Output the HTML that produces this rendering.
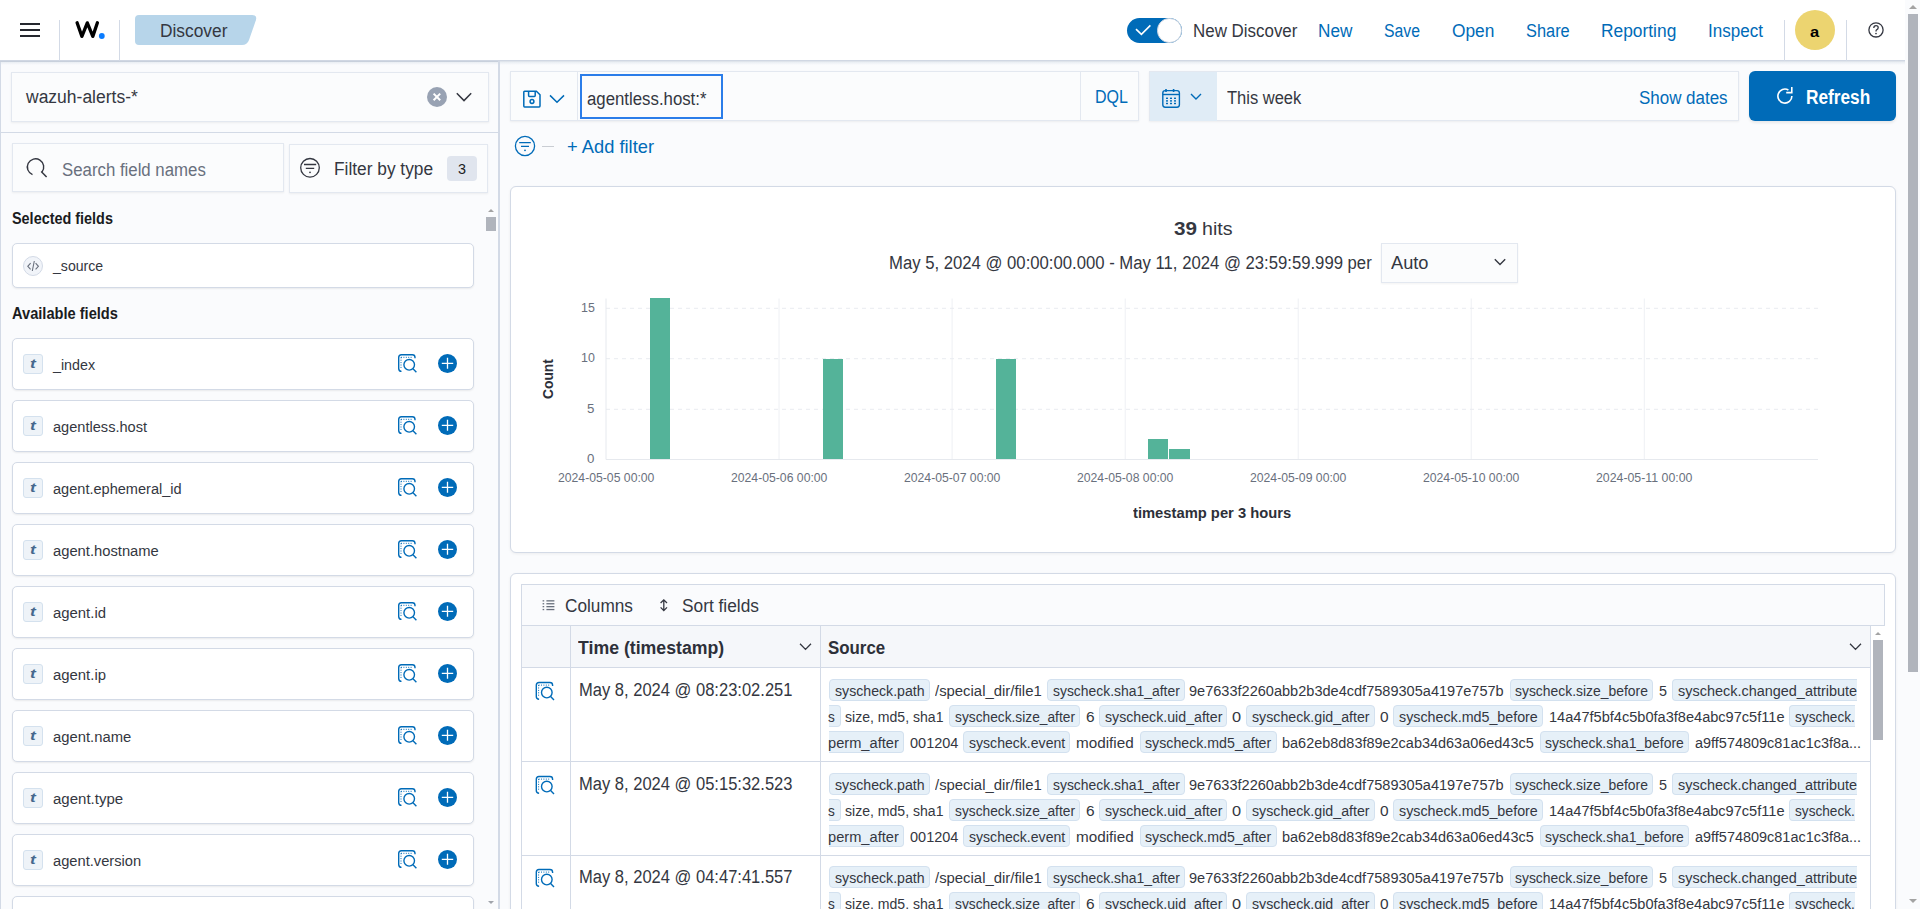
<!DOCTYPE html>
<html><head><meta charset="utf-8"><title>Discover</title>
<style>
html,body{margin:0;padding:0;width:1920px;height:909px;overflow:hidden;background:#fafbfd;font-family:"Liberation Sans",sans-serif;color:#343741}
.t{position:absolute;white-space:nowrap;line-height:1;transform-origin:0 0}
.a{position:absolute;box-sizing:border-box}
svg{position:absolute;overflow:visible}
#root{position:relative;width:1920px;height:909px;overflow:hidden}

</style></head><body>
<div id="root">
<div class="a" style="left:0px;top:0px;width:1905px;height:61px;background:#fff;"></div>
<div class="a" style="left:0px;top:60px;width:1905px;height:1px;background:#d0d7e3;"></div>
<div class="a" style="left:0px;top:61px;width:500px;height:1px;background:#c8d0dc;"></div>
<div class="a" style="left:500px;top:61px;width:1405px;height:1px;background:#dfe4eb;"></div>
<div class="a" style="left:0px;top:62px;width:1905px;height:3px;background:linear-gradient(#e9edf3,rgba(250,251,253,0));"></div>
<div class="a" style="left:20px;top:22.65px;width:20px;height:2px;background:#25282f;"></div>
<div class="a" style="left:20px;top:29px;width:20px;height:2px;background:#25282f;"></div>
<div class="a" style="left:20px;top:35.3px;width:20px;height:2px;background:#25282f;"></div>
<div class="a" style="left:59px;top:20px;width:1px;height:41px;background:#d3dae6;"></div>
<div class="a" style="left:119px;top:20px;width:1px;height:41px;background:#d3dae6;"></div>
<svg style="left:0;top:0" width="1" height="1"><path d="M77.1 22.8 L81.9 36.4 L87.3 22.9 L92.8 36.4 L97.4 22.8" fill="none" stroke="#000" stroke-width="3.3" stroke-linejoin="round" stroke-linecap="round"/><circle cx="101.8" cy="36" r="2.9" fill="#0a7cff"/></svg>
<svg style="left:0;top:0" width="300" height="61"><path d="M139 15 H252.2 Q257.6 15 255.8 20.4 L249 40 Q247.2 45 242 45 H139 Q135 45 135 41 V19 Q135 15 139 15 Z" fill="#b7d5ea"/></svg>
<div class="t" style="left:160.40px;top:21.76px;font-size:18px;color:#343741;transform:scaleX(0.9626);">Discover</div>
<div class="a" style="left:1127px;top:18px;width:55px;height:25px;background:#006bb8;border-radius:13px;"></div>
<div class="a" style="left:1157.2px;top:18.4px;width:24.4px;height:24.4px;background:#fff;border-radius:50%;border:1px solid #c9d3e0;"></div>
<svg style="left:0;top:0" width="1" height="1"><path d="M1136 29.1 L1141.4 34.4 L1150.4 25.4" fill="none" stroke="#fff" stroke-width="1.6"/></svg>
<div class="t" style="left:1192.70px;top:22.26px;font-size:18px;color:#343741;transform:scaleX(0.9403);">New Discover</div>
<div class="t" style="left:1318.20px;top:22.26px;font-size:18px;color:#006bb8;transform:scaleX(0.9551);">New</div>
<div class="t" style="left:1384.00px;top:22.26px;font-size:18px;color:#006bb8;transform:scaleX(0.8774);">Save</div>
<div class="t" style="left:1451.70px;top:22.26px;font-size:18px;color:#006bb8;transform:scaleX(0.9626);">Open</div>
<div class="t" style="left:1525.70px;top:22.26px;font-size:18px;color:#006bb8;transform:scaleX(0.9095);">Share</div>
<div class="t" style="left:1600.80px;top:22.26px;font-size:18px;color:#006bb8;transform:scaleX(0.9648);">Reporting</div>
<div class="t" style="left:1708.20px;top:22.26px;font-size:18px;color:#006bb8;transform:scaleX(0.9475);">Inspect</div>
<div class="a" style="left:1784px;top:20px;width:1px;height:41px;background:#d3dae6;"></div>
<div class="a" style="left:1795px;top:10px;width:40px;height:40px;background:#ecd470;border-radius:50%;"></div>
<div class="t" style="left:1810.30px;top:23.68px;font-size:15.5px;color:#000;font-weight:700;transform:scaleX(1.0667);">a</div>
<div class="a" style="left:1846px;top:20px;width:1px;height:41px;background:#d3dae6;"></div>
<svg style="left:0;top:0" width="1" height="1"><circle cx="1876" cy="29.9" r="7.1" fill="none" stroke="#343741" stroke-width="1.3"/><path d="M1873.8 27.9 Q1873.8 25.6 1876 25.6 Q1878.2 25.6 1878.2 27.6 Q1878.2 29.1 1876.6 29.8 Q1876 30.2 1876 31.4" fill="none" stroke="#343741" stroke-width="1.3"/><circle cx="1876" cy="33.5" r="0.85" fill="#343741"/></svg>
<div class="a" style="left:1905px;top:61px;width:15px;height:848px;background:#fafbfd;"></div>
<div class="a" style="left:1908px;top:14px;width:10px;height:657.5px;background:#b0b4bc;"></div>
<svg style="left:0;top:0" width="1" height="1"><path d="M1909 9 L1913 5 L1917 9 Z" fill="#a3a3a3"/><path d="M1909 899 L1913 903 L1917 899 Z" fill="#a3a3a3"/></svg>
<div class="a" style="left:0px;top:62px;width:1px;height:847px;background:#d3dae6;"></div>
<div class="a" style="left:498px;top:61px;width:2px;height:848px;background:#d3dae6;"></div>
<div class="a" style="left:11px;top:72px;width:478px;height:50px;background:#fbfcfd;border:1px solid #e3e8f0;box-shadow:0 1px 2px rgba(0,0,0,0.06);"></div>
<div class="t" style="left:25.80px;top:88.46px;font-size:18px;color:#343741;transform:scaleX(0.9718);">wazuh-alerts-*</div>
<div class="a" style="left:427px;top:87px;width:20px;height:20px;background:#98a2b3;border-radius:50%;"></div>
<svg style="left:0;top:0" width="1" height="1"><path d="M433.6 93.6 L440.2 100.2 M440.2 93.6 L433.6 100.2" stroke="#fff" stroke-width="2"/><path d="M456.8 93.2 L464 100.6 L471.2 93.2" fill="none" stroke="#343741" stroke-width="1.5"/></svg>
<div class="a" style="left:1px;top:132px;width:497px;height:1px;background:#d3dae6;"></div>
<div class="a" style="left:12px;top:143px;width:272px;height:49px;background:#fbfcfd;border:1px solid #e3e8f0;box-shadow:0 1px 2px rgba(0,0,0,0.06);"></div>
<svg style="left:0;top:0" width="1" height="1"><path d="M32.5 174.6 A8.2 8.2 0 1 1 42 172" fill="none" stroke="#343741" stroke-width="1.4"/><path d="M41.2 171.4 L46.6 177" stroke="#343741" stroke-width="1.5"/></svg>
<div class="t" style="left:61.80px;top:160.86px;font-size:18px;color:#69707d;transform:scaleX(0.9332);">Search field names</div>
<div class="a" style="left:289px;top:143.5px;width:199px;height:49px;background:#fbfcfd;border:1px solid #e3e8f0;box-shadow:0 1px 2px rgba(0,0,0,0.06);"></div>
<svg style="left:0;top:0" width="1" height="1"><circle cx="310" cy="167.8" r="9.3" fill="none" stroke="#343741" stroke-width="1.3"/><path d="M304 164.5 H316.2 M305.8 168.4 H314.2" stroke="#343741" stroke-width="1.4"/><circle cx="310" cy="172.3" r="0.9" fill="#343741"/></svg>
<div class="t" style="left:334.20px;top:159.76px;font-size:18px;color:#343741;transform:scaleX(0.9617);">Filter by type</div>
<div class="a" style="left:447px;top:156px;width:30px;height:25px;background:#e0e5ee;border-radius:4px;"></div>
<div class="t" style="left:458.10px;top:160.88px;font-size:15.5px;color:#1a1c21;transform:scaleX(0.9275);">3</div>
<div class="t" style="left:12.20px;top:210.76px;font-size:16px;color:#1a1c21;font-weight:700;transform:scaleX(0.9005);">Selected fields</div>
<div class="a" style="left:12px;top:243px;width:462px;height:45px;background:#fff;border:1px solid #d3dae6;border-radius:5px;box-shadow:0 1px 2px rgba(0,0,0,0.07);"></div>
<div class="a" style="left:23px;top:256px;width:20px;height:20px;background:#f1f4f9;border:1px solid #d3dae6;border-radius:50%;"></div>
<svg style="left:0;top:0" width="1" height="1"><path d="M30.6 263.2 L27.8 266.3 L30.6 269.3 M35.6 263.2 L38.4 266.3 L35.6 269.3 M34.3 261 L32.3 271" fill="none" stroke="#69707d" stroke-width="1.1"/></svg>
<div class="t" style="left:53.20px;top:258.48px;font-size:15.5px;color:#343741;transform:scaleX(0.9101);">_source</div>
<div class="t" style="left:12.20px;top:306.06px;font-size:16px;color:#1a1c21;font-weight:700;transform:scaleX(0.9137);">Available fields</div>
<div class="a" style="left:12px;top:338px;width:462px;height:52px;background:#fff;border:1px solid #d3dae6;border-radius:5px;box-shadow:0 1px 2px rgba(0,0,0,0.07);"></div>
<div class="a" style="left:23px;top:354px;width:20px;height:20px;background:#eef3f8;border:1px solid #d4e1ee;border-radius:3px;"></div>
<div class="t" style="left:30.00px;top:357.20px;font-size:13px;color:#46698e;font-weight:700;transform:scaleX(1.3353);font-style:italic;">t</div>
<div class="t" style="left:53.40px;top:356.88px;font-size:15.5px;color:#343741;transform:scaleX(0.9215);">_index</div>
<svg style="left:0;top:0" width="1" height="1"><g transform="translate(398,354)" fill="none" stroke="#006bb8" stroke-width="1.4"><path d="M3.5 17.4 Q0.7 17.4 0.7 14.6 V3.4 Q0.7 0.7 3.4 0.7 H14.3 Q17 0.7 17 3.4 V4.3"/><circle cx="11.2" cy="10.8" r="5.3"/><path d="M15 14.8 L18.4 18.3"/><path d="M3 3.3 H15 M3 3.3 V14" stroke-width="1" stroke-dasharray="1 1.4"/></g></svg>
<div class="a" style="left:438px;top:353.8px;width:19px;height:19px;background:#006bb8;border-radius:50%;"></div>
<svg style="left:0;top:0" width="1" height="1"><path d="M441.8 363.3 H453.2 M447.5 357.8 V368.8" stroke="#fff" stroke-width="1.3"/></svg>
<div class="a" style="left:12px;top:400px;width:462px;height:52px;background:#fff;border:1px solid #d3dae6;border-radius:5px;box-shadow:0 1px 2px rgba(0,0,0,0.07);"></div>
<div class="a" style="left:23px;top:416px;width:20px;height:20px;background:#eef3f8;border:1px solid #d4e1ee;border-radius:3px;"></div>
<div class="t" style="left:30.00px;top:419.20px;font-size:13px;color:#46698e;font-weight:700;transform:scaleX(1.3353);font-style:italic;">t</div>
<div class="t" style="left:53.40px;top:418.88px;font-size:15.5px;color:#343741;transform:scaleX(0.9413);">agentless.host</div>
<svg style="left:0;top:0" width="1" height="1"><g transform="translate(398,416)" fill="none" stroke="#006bb8" stroke-width="1.4"><path d="M3.5 17.4 Q0.7 17.4 0.7 14.6 V3.4 Q0.7 0.7 3.4 0.7 H14.3 Q17 0.7 17 3.4 V4.3"/><circle cx="11.2" cy="10.8" r="5.3"/><path d="M15 14.8 L18.4 18.3"/><path d="M3 3.3 H15 M3 3.3 V14" stroke-width="1" stroke-dasharray="1 1.4"/></g></svg>
<div class="a" style="left:438px;top:415.8px;width:19px;height:19px;background:#006bb8;border-radius:50%;"></div>
<svg style="left:0;top:0" width="1" height="1"><path d="M441.8 425.3 H453.2 M447.5 419.8 V430.8" stroke="#fff" stroke-width="1.3"/></svg>
<div class="a" style="left:12px;top:462px;width:462px;height:52px;background:#fff;border:1px solid #d3dae6;border-radius:5px;box-shadow:0 1px 2px rgba(0,0,0,0.07);"></div>
<div class="a" style="left:23px;top:478px;width:20px;height:20px;background:#eef3f8;border:1px solid #d4e1ee;border-radius:3px;"></div>
<div class="t" style="left:30.00px;top:481.20px;font-size:13px;color:#46698e;font-weight:700;transform:scaleX(1.3353);font-style:italic;">t</div>
<div class="t" style="left:53.40px;top:480.88px;font-size:15.5px;color:#343741;transform:scaleX(0.9392);">agent.ephemeral_id</div>
<svg style="left:0;top:0" width="1" height="1"><g transform="translate(398,478)" fill="none" stroke="#006bb8" stroke-width="1.4"><path d="M3.5 17.4 Q0.7 17.4 0.7 14.6 V3.4 Q0.7 0.7 3.4 0.7 H14.3 Q17 0.7 17 3.4 V4.3"/><circle cx="11.2" cy="10.8" r="5.3"/><path d="M15 14.8 L18.4 18.3"/><path d="M3 3.3 H15 M3 3.3 V14" stroke-width="1" stroke-dasharray="1 1.4"/></g></svg>
<div class="a" style="left:438px;top:477.8px;width:19px;height:19px;background:#006bb8;border-radius:50%;"></div>
<svg style="left:0;top:0" width="1" height="1"><path d="M441.8 487.3 H453.2 M447.5 481.8 V492.8" stroke="#fff" stroke-width="1.3"/></svg>
<div class="a" style="left:12px;top:524px;width:462px;height:52px;background:#fff;border:1px solid #d3dae6;border-radius:5px;box-shadow:0 1px 2px rgba(0,0,0,0.07);"></div>
<div class="a" style="left:23px;top:540px;width:20px;height:20px;background:#eef3f8;border:1px solid #d4e1ee;border-radius:3px;"></div>
<div class="t" style="left:30.00px;top:543.20px;font-size:13px;color:#46698e;font-weight:700;transform:scaleX(1.3353);font-style:italic;">t</div>
<div class="t" style="left:53.40px;top:542.88px;font-size:15.5px;color:#343741;transform:scaleX(0.9517);">agent.hostname</div>
<svg style="left:0;top:0" width="1" height="1"><g transform="translate(398,540)" fill="none" stroke="#006bb8" stroke-width="1.4"><path d="M3.5 17.4 Q0.7 17.4 0.7 14.6 V3.4 Q0.7 0.7 3.4 0.7 H14.3 Q17 0.7 17 3.4 V4.3"/><circle cx="11.2" cy="10.8" r="5.3"/><path d="M15 14.8 L18.4 18.3"/><path d="M3 3.3 H15 M3 3.3 V14" stroke-width="1" stroke-dasharray="1 1.4"/></g></svg>
<div class="a" style="left:438px;top:539.8px;width:19px;height:19px;background:#006bb8;border-radius:50%;"></div>
<svg style="left:0;top:0" width="1" height="1"><path d="M441.8 549.3 H453.2 M447.5 543.8 V554.8" stroke="#fff" stroke-width="1.3"/></svg>
<div class="a" style="left:12px;top:586px;width:462px;height:52px;background:#fff;border:1px solid #d3dae6;border-radius:5px;box-shadow:0 1px 2px rgba(0,0,0,0.07);"></div>
<div class="a" style="left:23px;top:602px;width:20px;height:20px;background:#eef3f8;border:1px solid #d4e1ee;border-radius:3px;"></div>
<div class="t" style="left:30.00px;top:605.20px;font-size:13px;color:#46698e;font-weight:700;transform:scaleX(1.3353);font-style:italic;">t</div>
<div class="t" style="left:53.40px;top:604.88px;font-size:15.5px;color:#343741;transform:scaleX(0.9606);">agent.id</div>
<svg style="left:0;top:0" width="1" height="1"><g transform="translate(398,602)" fill="none" stroke="#006bb8" stroke-width="1.4"><path d="M3.5 17.4 Q0.7 17.4 0.7 14.6 V3.4 Q0.7 0.7 3.4 0.7 H14.3 Q17 0.7 17 3.4 V4.3"/><circle cx="11.2" cy="10.8" r="5.3"/><path d="M15 14.8 L18.4 18.3"/><path d="M3 3.3 H15 M3 3.3 V14" stroke-width="1" stroke-dasharray="1 1.4"/></g></svg>
<div class="a" style="left:438px;top:601.8px;width:19px;height:19px;background:#006bb8;border-radius:50%;"></div>
<svg style="left:0;top:0" width="1" height="1"><path d="M441.8 611.3 H453.2 M447.5 605.8 V616.8" stroke="#fff" stroke-width="1.3"/></svg>
<div class="a" style="left:12px;top:648px;width:462px;height:52px;background:#fff;border:1px solid #d3dae6;border-radius:5px;box-shadow:0 1px 2px rgba(0,0,0,0.07);"></div>
<div class="a" style="left:23px;top:664px;width:20px;height:20px;background:#eef3f8;border:1px solid #d4e1ee;border-radius:3px;"></div>
<div class="t" style="left:30.00px;top:667.20px;font-size:13px;color:#46698e;font-weight:700;transform:scaleX(1.3353);font-style:italic;">t</div>
<div class="t" style="left:53.40px;top:666.88px;font-size:15.5px;color:#343741;transform:scaleX(0.9606);">agent.ip</div>
<svg style="left:0;top:0" width="1" height="1"><g transform="translate(398,664)" fill="none" stroke="#006bb8" stroke-width="1.4"><path d="M3.5 17.4 Q0.7 17.4 0.7 14.6 V3.4 Q0.7 0.7 3.4 0.7 H14.3 Q17 0.7 17 3.4 V4.3"/><circle cx="11.2" cy="10.8" r="5.3"/><path d="M15 14.8 L18.4 18.3"/><path d="M3 3.3 H15 M3 3.3 V14" stroke-width="1" stroke-dasharray="1 1.4"/></g></svg>
<div class="a" style="left:438px;top:663.8px;width:19px;height:19px;background:#006bb8;border-radius:50%;"></div>
<svg style="left:0;top:0" width="1" height="1"><path d="M441.8 673.3 H453.2 M447.5 667.8 V678.8" stroke="#fff" stroke-width="1.3"/></svg>
<div class="a" style="left:12px;top:710px;width:462px;height:52px;background:#fff;border:1px solid #d3dae6;border-radius:5px;box-shadow:0 1px 2px rgba(0,0,0,0.07);"></div>
<div class="a" style="left:23px;top:726px;width:20px;height:20px;background:#eef3f8;border:1px solid #d4e1ee;border-radius:3px;"></div>
<div class="t" style="left:30.00px;top:729.20px;font-size:13px;color:#46698e;font-weight:700;transform:scaleX(1.3353);font-style:italic;">t</div>
<div class="t" style="left:53.40px;top:728.88px;font-size:15.5px;color:#343741;transform:scaleX(0.9551);">agent.name</div>
<svg style="left:0;top:0" width="1" height="1"><g transform="translate(398,726)" fill="none" stroke="#006bb8" stroke-width="1.4"><path d="M3.5 17.4 Q0.7 17.4 0.7 14.6 V3.4 Q0.7 0.7 3.4 0.7 H14.3 Q17 0.7 17 3.4 V4.3"/><circle cx="11.2" cy="10.8" r="5.3"/><path d="M15 14.8 L18.4 18.3"/><path d="M3 3.3 H15 M3 3.3 V14" stroke-width="1" stroke-dasharray="1 1.4"/></g></svg>
<div class="a" style="left:438px;top:725.8px;width:19px;height:19px;background:#006bb8;border-radius:50%;"></div>
<svg style="left:0;top:0" width="1" height="1"><path d="M441.8 735.3 H453.2 M447.5 729.8 V740.8" stroke="#fff" stroke-width="1.3"/></svg>
<div class="a" style="left:12px;top:772px;width:462px;height:52px;background:#fff;border:1px solid #d3dae6;border-radius:5px;box-shadow:0 1px 2px rgba(0,0,0,0.07);"></div>
<div class="a" style="left:23px;top:788px;width:20px;height:20px;background:#eef3f8;border:1px solid #d4e1ee;border-radius:3px;"></div>
<div class="t" style="left:30.00px;top:791.20px;font-size:13px;color:#46698e;font-weight:700;transform:scaleX(1.3353);font-style:italic;">t</div>
<div class="t" style="left:53.40px;top:790.88px;font-size:15.5px;color:#343741;transform:scaleX(0.9681);">agent.type</div>
<svg style="left:0;top:0" width="1" height="1"><g transform="translate(398,788)" fill="none" stroke="#006bb8" stroke-width="1.4"><path d="M3.5 17.4 Q0.7 17.4 0.7 14.6 V3.4 Q0.7 0.7 3.4 0.7 H14.3 Q17 0.7 17 3.4 V4.3"/><circle cx="11.2" cy="10.8" r="5.3"/><path d="M15 14.8 L18.4 18.3"/><path d="M3 3.3 H15 M3 3.3 V14" stroke-width="1" stroke-dasharray="1 1.4"/></g></svg>
<div class="a" style="left:438px;top:787.8px;width:19px;height:19px;background:#006bb8;border-radius:50%;"></div>
<svg style="left:0;top:0" width="1" height="1"><path d="M441.8 797.3 H453.2 M447.5 791.8 V802.8" stroke="#fff" stroke-width="1.3"/></svg>
<div class="a" style="left:12px;top:834px;width:462px;height:52px;background:#fff;border:1px solid #d3dae6;border-radius:5px;box-shadow:0 1px 2px rgba(0,0,0,0.07);"></div>
<div class="a" style="left:23px;top:850px;width:20px;height:20px;background:#eef3f8;border:1px solid #d4e1ee;border-radius:3px;"></div>
<div class="t" style="left:30.00px;top:853.20px;font-size:13px;color:#46698e;font-weight:700;transform:scaleX(1.3353);font-style:italic;">t</div>
<div class="t" style="left:53.40px;top:852.88px;font-size:15.5px;color:#343741;transform:scaleX(0.9478);">agent.version</div>
<svg style="left:0;top:0" width="1" height="1"><g transform="translate(398,850)" fill="none" stroke="#006bb8" stroke-width="1.4"><path d="M3.5 17.4 Q0.7 17.4 0.7 14.6 V3.4 Q0.7 0.7 3.4 0.7 H14.3 Q17 0.7 17 3.4 V4.3"/><circle cx="11.2" cy="10.8" r="5.3"/><path d="M15 14.8 L18.4 18.3"/><path d="M3 3.3 H15 M3 3.3 V14" stroke-width="1" stroke-dasharray="1 1.4"/></g></svg>
<div class="a" style="left:438px;top:849.8px;width:19px;height:19px;background:#006bb8;border-radius:50%;"></div>
<svg style="left:0;top:0" width="1" height="1"><path d="M441.8 859.3 H453.2 M447.5 853.8 V864.8" stroke="#fff" stroke-width="1.3"/></svg>
<div class="a" style="left:12px;top:896px;width:462px;height:52px;background:#fff;border:1px solid #d3dae6;border-radius:5px;box-shadow:0 1px 2px rgba(0,0,0,0.07);"></div>
<div class="a" style="left:486px;top:217px;width:10px;height:14px;background:#b0b4bc;"></div>
<svg style="left:0;top:0" width="1" height="1"><path d="M488 212 L491 209 L494 212 Z" fill="#a3a3a3"/><path d="M488 901 L491 904 L494 901 Z" fill="#a0a4ab"/></svg>
<div class="a" style="left:510px;top:71px;width:629px;height:50px;background:#fbfcfd;border:1px solid #e3e8f0;box-shadow:0 1px 2px rgba(0,0,0,0.06);"></div>
<svg style="left:0;top:0" width="1" height="1"><g fill="none" stroke="#006bb8" stroke-width="1.5"><path d="M524.6 91.2 H536.4 L540 94.8 V106 Q540 106.9 539.1 106.9 H524.6 Q523.8 106.9 523.8 106 V92 Q523.8 91.2 524.6 91.2 Z"/><path d="M528.6 91.4 V95.6 Q528.6 96.4 529.4 96.4 H534.4 Q535.2 96.4 535.2 95.6 V91.4"/><circle cx="532" cy="101.5" r="1.9"/><path d="M550 95.4 L557 102.2 L564 95.4"/></g></svg>
<div class="a" style="left:577px;top:72px;width:1px;height:48px;background:#e3e8f0;"></div>
<div class="a" style="left:580px;top:74px;width:143px;height:45px;border:2px solid #2b7de9;background:#fbfcfd;"></div>
<div class="t" style="left:587.10px;top:90.36px;font-size:18px;color:#343741;transform:scaleX(0.9329);">agentless.host:*</div>
<div class="a" style="left:1080px;top:72px;width:1px;height:48px;background:#e3e8f0;"></div>
<div class="t" style="left:1094.70px;top:87.56px;font-size:18px;color:#006bb8;transform:scaleX(0.8888);">DQL</div>
<div class="a" style="left:1149px;top:71px;width:590px;height:50px;background:#fbfcfd;border:1px solid #e3e8f0;box-shadow:0 1px 2px rgba(0,0,0,0.06);"></div>
<div class="a" style="left:1149.5px;top:71.5px;width:67.5px;height:49px;background:#e0ecf6;"></div>
<svg style="left:0;top:0" width="1" height="1"><g fill="none" stroke="#006bb8" stroke-width="1.4"><rect x="1162.8" y="90.6" width="16.6" height="16.6" rx="2.4"/><path d="M1162.8 94.5 H1179.4"/><path d="M1166 89 V92 M1173.6 89 V92" stroke-width="1.6"/><path d="M1191 94 L1196 99 L1201 94"/></g><g fill="#006bb8"><rect x="1166" y="97.6" width="2" height="1.4"/><rect x="1170" y="97.6" width="2" height="1.4"/><rect x="1174" y="97.6" width="2" height="1.4"/><rect x="1166" y="100.2" width="2" height="1.4"/><rect x="1170" y="100.2" width="2" height="1.4"/><rect x="1174" y="100.2" width="2" height="1.4"/><rect x="1166" y="102.8" width="2" height="1.4"/><rect x="1170" y="102.8" width="2" height="1.4"/><rect x="1174" y="102.8" width="2" height="1.4"/></g></svg>
<div class="t" style="left:1226.90px;top:88.76px;font-size:18px;color:#343741;transform:scaleX(0.9169);">This week</div>
<div class="t" style="left:1639.20px;top:88.76px;font-size:18px;color:#006bb8;transform:scaleX(0.9419);">Show dates</div>
<div class="a" style="left:1749px;top:71px;width:147px;height:50px;background:#006bb8;border-radius:6px;box-shadow:0 2px 3px rgba(0,0,0,0.08);"></div>
<svg style="left:0;top:0" width="1" height="1"><path d="M1791.9 96 A7 7 0 1 1 1788.4 90" fill="none" stroke="#fff" stroke-width="1.6"/><path d="M1791.8 87 V92.6 H1786.2" fill="none" stroke="#fff" stroke-width="1.6"/></svg>
<div class="t" style="left:1805.60px;top:86.87px;font-size:20px;color:#fff;font-weight:700;transform:scaleX(0.8619);">Refresh</div>
<svg style="left:0;top:0" width="1" height="1"><g fill="none" stroke="#006bb8" stroke-width="1.3"><circle cx="525" cy="146" r="9.6"/><path d="M519.2 142.6 H530.8 M521 146.4 H529"/></g><circle cx="525" cy="150.3" r="0.9" fill="#006bb8"/></svg>
<div class="a" style="left:542px;top:145.5px;width:12px;height:1px;background:#c9cdd3;"></div>
<div class="t" style="left:566.90px;top:136.82px;font-size:19px;color:#006bb8;transform:scaleX(0.9633);">+ Add filter</div>
<div class="a" style="left:510px;top:186px;width:1386px;height:367px;background:#fff;border:1px solid #d3dae6;border-radius:6px;box-shadow:0 1px 3px rgba(0,0,0,0.06);"></div>
<div class="t" style="left:1173.70px;top:218.82px;font-size:19px;color:#343741;font-weight:700;transform:scaleX(1.0880);">39</div>
<div class="t" style="left:1202.30px;top:218.82px;font-size:19px;color:#343741;transform:scaleX(1.0312);">hits</div>
<div class="t" style="left:888.60px;top:253.76px;font-size:18px;color:#343741;transform:scaleX(0.9273);">May 5, 2024 @ 00:00:00.000 - May 11, 2024 @ 23:59:59.999 per</div>
<div class="a" style="left:1381px;top:242.5px;width:137px;height:40px;background:#fbfcfd;border:1px solid #e3e8f0;box-shadow:0 1px 2px rgba(0,0,0,0.05);"></div>
<div class="t" style="left:1391.10px;top:253.76px;font-size:18px;color:#343741;transform:scaleX(1.0127);">Auto</div>
<svg style="left:0;top:0" width="1" height="1"><path d="M1494.8 259.2 L1500 264.4 L1505.2 259.2" fill="none" stroke="#343741" stroke-width="1.4"/></svg>
<svg style="left:0;top:0" width="1" height="1"><path d="M779.0 298.5 V459" stroke="#eef0f4" stroke-width="1"/><path d="M952.1 298.5 V459" stroke="#eef0f4" stroke-width="1"/><path d="M1125.2 298.5 V459" stroke="#eef0f4" stroke-width="1"/><path d="M1298.2 298.5 V459" stroke="#eef0f4" stroke-width="1"/><path d="M1471.2 298.5 V459" stroke="#eef0f4" stroke-width="1"/><path d="M1644.3 298.5 V459" stroke="#eef0f4" stroke-width="1"/><path d="M606 308.3 H1818" stroke="#e9ecf0" stroke-width="1" stroke-dasharray="4 4"/><path d="M606 358.7 H1818" stroke="#e9ecf0" stroke-width="1" stroke-dasharray="4 4"/><path d="M606 409.3 H1818" stroke="#e9ecf0" stroke-width="1" stroke-dasharray="4 4"/><path d="M606 298.5 V459.5 M606 459.5 H1818" stroke="#e6e9ee" stroke-width="1"/></svg>
<div class="a" style="left:650px;top:298.4px;width:20.200000000000045px;height:160.8px;background:#54b399;"></div>
<div class="a" style="left:823px;top:358.6px;width:20.200000000000045px;height:100.59999999999997px;background:#54b399;"></div>
<div class="a" style="left:996.2px;top:358.6px;width:20.199999999999932px;height:100.59999999999997px;background:#54b399;"></div>
<div class="a" style="left:1147.7px;top:439.3px;width:20.09999999999991px;height:19.899999999999977px;background:#54b399;"></div>
<div class="a" style="left:1169.2px;top:449.2px;width:20.59999999999991px;height:10.0px;background:#54b399;"></div>
<div class="t" style="left:580.60px;top:302.14px;font-size:12px;color:#69707d;transform:scaleX(1.0330);">15</div>
<div class="t" style="left:580.60px;top:352.44px;font-size:12px;color:#69707d;transform:scaleX(1.0330);">10</div>
<div class="t" style="left:587.00px;top:402.64px;font-size:12px;color:#69707d;transform:scaleX(1.1065);">5</div>
<div class="t" style="left:587.00px;top:452.64px;font-size:12px;color:#69707d;transform:scaleX(1.1065);">0</div>
<div class="t" style="left:557.80px;top:471.10px;font-size:13px;color:#69707d;transform:scaleX(0.9391);">2024-05-05 00:00</div>
<div class="t" style="left:730.85px;top:471.10px;font-size:13px;color:#69707d;transform:scaleX(0.9391);">2024-05-06 00:00</div>
<div class="t" style="left:903.90px;top:471.10px;font-size:13px;color:#69707d;transform:scaleX(0.9391);">2024-05-07 00:00</div>
<div class="t" style="left:1076.95px;top:471.10px;font-size:13px;color:#69707d;transform:scaleX(0.9391);">2024-05-08 00:00</div>
<div class="t" style="left:1250.00px;top:471.10px;font-size:13px;color:#69707d;transform:scaleX(0.9391);">2024-05-09 00:00</div>
<div class="t" style="left:1423.05px;top:471.10px;font-size:13px;color:#69707d;transform:scaleX(0.9391);">2024-05-10 00:00</div>
<div class="t" style="left:1596.10px;top:471.10px;font-size:13px;color:#69707d;transform:scaleX(0.9480);">2024-05-11 00:00</div>
<div class="t" style="left:542px;top:399px;font-size:15px;font-weight:700;color:#2d3039;transform:rotate(-90deg) scaleX(0.92);transform-origin:0 0;line-height:11px">Count</div>
<div class="t" style="left:1133.00px;top:505.30px;font-size:15px;color:#2d3039;font-weight:700;transform:scaleX(0.9833);">timestamp per 3 hours</div>
<div class="a" style="left:510px;top:573px;width:1386px;height:360px;background:#fff;border:1px solid #d3dae6;border-radius:6px;box-shadow:0 1px 3px rgba(0,0,0,0.06);"></div>
<div class="a" style="left:521px;top:584px;width:1364px;height:42px;background:#fff;border:1px solid #d3dae6;"></div>
<div class="a" style="left:521px;top:625px;width:1px;height:290px;background:#d3dae6;"></div>
<div class="a" style="left:522px;top:585px;width:1362px;height:40px;background:#fafbfd;"></div>
<div class="a" style="left:522px;top:625px;width:1362px;height:1px;background:#d3dae6;"></div>
<svg style="left:0;top:0" width="1" height="1"><g fill="#69707d"><rect x="542.6" y="600.1999999999999" width="1.6" height="1.3"/><rect x="546.4" y="600.1999999999999" width="8" height="1.3"/><rect x="542.6" y="603.1" width="1.6" height="1.3"/><rect x="546.4" y="603.1" width="8" height="1.3"/><rect x="542.6" y="606.0" width="1.6" height="1.3"/><rect x="546.4" y="606.0" width="8" height="1.3"/><rect x="542.6" y="608.9" width="1.6" height="1.3"/><rect x="546.4" y="608.9" width="8" height="1.3"/></g><path d="M663.8 600.2 V610.2 M660.6 603 L663.8 599.8 L667 603 M660.6 607.4 L663.8 610.6 L667 607.4" fill="none" stroke="#343741" stroke-width="1.3"/></svg>
<div class="t" style="left:565.30px;top:596.76px;font-size:18px;color:#343741;transform:scaleX(0.9559);">Columns</div>
<div class="t" style="left:681.80px;top:596.76px;font-size:18px;color:#343741;transform:scaleX(0.9619);">Sort fields</div>
<div class="a" style="left:522px;top:626px;width:1348px;height:41.5px;background:#f5f7fa;"></div>
<div class="a" style="left:522px;top:667px;width:1348px;height:1px;background:#d3dae6;"></div>
<div class="a" style="left:570px;top:626px;width:1px;height:290px;background:#d3dae6;"></div>
<div class="a" style="left:819.5px;top:626px;width:1px;height:290px;background:#d3dae6;"></div>
<div class="a" style="left:1870px;top:626px;width:1px;height:290px;background:#d3dae6;"></div>
<div class="t" style="left:578.40px;top:638.56px;font-size:18px;color:#2d3039;font-weight:700;transform:scaleX(0.9832);">Time (timestamp)</div>
<div class="t" style="left:828.00px;top:638.56px;font-size:18px;color:#2d3039;font-weight:700;transform:scaleX(0.9372);">Source</div>
<svg style="left:0;top:0" width="1" height="1"><path d="M800 643.8 L805.5 649.4 L811 643.8 M1850 643.8 L1855.5 649.4 L1861 643.8" fill="none" stroke="#343741" stroke-width="1.3"/></svg>
<div class="a" style="left:1873px;top:640px;width:10px;height:100px;background:#b0b4bc;"></div>
<svg style="left:0;top:0" width="1" height="1"><path d="M1875 635 L1878 632 L1881 635 Z" fill="#a3a3a3"/></svg>
<svg style="left:0;top:0" width="1" height="1"><g transform="translate(535.6,681.8)" fill="none" stroke="#006bb8" stroke-width="1.4"><path d="M3.5 17.4 Q0.7 17.4 0.7 14.6 V3.4 Q0.7 0.7 3.4 0.7 H14.3 Q17 0.7 17 3.4 V4.3"/><circle cx="11.2" cy="10.8" r="5.3"/><path d="M15 14.8 L18.4 18.3"/><path d="M3 3.3 H15 M3 3.3 V14" stroke-width="1" stroke-dasharray="1 1.4"/></g></svg>
<div class="t" style="left:578.60px;top:680.76px;font-size:18px;color:#343741;transform:scaleX(0.9185);">May 8, 2024 @ 08:23:02.251</div>
<div class="a" style="left:829.3px;top:679px;width:100.40000000000009px;height:22px;background:#e6f0f8;border:1px solid #d3e1ef;border-radius:4px;"></div>
<div class="t" style="left:834.70px;top:682.88px;font-size:15.5px;color:#343741;transform:scaleX(0.9122);">syscheck.path</div>
<div class="t" style="left:934.70px;top:682.88px;font-size:15.5px;color:#343741;transform:scaleX(0.9599);">/special_dir/file1</div>
<div class="a" style="left:1047.2px;top:679px;width:137.5999999999999px;height:22px;background:#e6f0f8;border:1px solid #d3e1ef;border-radius:4px;"></div>
<div class="t" style="left:1052.60px;top:682.88px;font-size:15.5px;color:#343741;transform:scaleX(0.8974);">syscheck.sha1_after</div>
<div class="t" style="left:1189.20px;top:682.88px;font-size:15.5px;color:#343741;transform:scaleX(0.9385);">9e7633f2260abb2b3de4cdf7589305a4197e757b</div>
<div class="a" style="left:1509.7px;top:679px;width:143.70000000000005px;height:22px;background:#e6f0f8;border:1px solid #d3e1ef;border-radius:4px;"></div>
<div class="t" style="left:1515.10px;top:682.88px;font-size:15.5px;color:#343741;transform:scaleX(0.8968);">syscheck.size_before</div>
<div class="t" style="left:1659.20px;top:682.88px;font-size:15.5px;color:#343741;transform:scaleX(0.9275);">5</div>
<div class="a" style="left:1672.3px;top:679px;width:184.5px;height:22px;background:#e6f0f8;border:1px solid #d3e1ef;border-radius:4px;border-right:none;border-top-right-radius:0;border-bottom-right-radius:0;"></div>
<div class="t" style="left:1677.70px;top:682.88px;font-size:15.5px;color:#343741;transform:scaleX(0.9321);">syscheck.changed_attribute</div>
<div class="a" style="left:829px;top:705px;width:11.5px;height:22px;background:#e6f0f8;border:1px solid #d3e1ef;border-radius:4px;border-left:none;border-top-left-radius:0;border-bottom-left-radius:0;"></div>
<div class="t" style="left:828.20px;top:708.88px;font-size:15.5px;color:#343741;transform:scaleX(0.8774);">s</div>
<div class="t" style="left:845.30px;top:708.88px;font-size:15.5px;color:#343741;transform:scaleX(0.9073);">size, md5, sha1</div>
<div class="a" style="left:949.4px;top:705px;width:130.80000000000007px;height:22px;background:#e6f0f8;border:1px solid #d3e1ef;border-radius:4px;"></div>
<div class="t" style="left:954.80px;top:708.88px;font-size:15.5px;color:#343741;transform:scaleX(0.8872);">syscheck.size_after</div>
<div class="t" style="left:1085.60px;top:708.88px;font-size:15.5px;color:#343741;transform:scaleX(0.9971);">6</div>
<div class="a" style="left:1099.3px;top:705px;width:128.20000000000005px;height:22px;background:#e6f0f8;border:1px solid #d3e1ef;border-radius:4px;"></div>
<div class="t" style="left:1104.70px;top:708.88px;font-size:15.5px;color:#343741;transform:scaleX(0.9145);">syscheck.uid_after</div>
<div class="t" style="left:1232.40px;top:708.88px;font-size:15.5px;color:#343741;transform:scaleX(1.0551);">0</div>
<div class="a" style="left:1246.25px;top:705px;width:128.3499999999999px;height:22px;background:#e6f0f8;border:1px solid #d3e1ef;border-radius:4px;"></div>
<div class="t" style="left:1251.65px;top:708.88px;font-size:15.5px;color:#343741;transform:scaleX(0.9157);">syscheck.gid_after</div>
<div class="t" style="left:1380.00px;top:708.88px;font-size:15.5px;color:#343741;transform:scaleX(0.9971);">0</div>
<div class="a" style="left:1393.1px;top:705px;width:149.60000000000014px;height:22px;background:#e6f0f8;border:1px solid #d3e1ef;border-radius:4px;"></div>
<div class="t" style="left:1398.50px;top:708.88px;font-size:15.5px;color:#343741;transform:scaleX(0.9205);">syscheck.md5_before</div>
<div class="t" style="left:1548.80px;top:708.88px;font-size:15.5px;color:#343741;transform:scaleX(0.9400);">14a47f5bf4c5b0fa3f8e4abc97c5f11e</div>
<div class="a" style="left:1789.1px;top:705px;width:65.90000000000009px;height:22px;background:#e6f0f8;border:1px solid #d3e1ef;border-radius:4px;border-right:none;border-top-right-radius:0;border-bottom-right-radius:0;"></div>
<div class="t" style="left:1794.50px;top:708.88px;font-size:15.5px;color:#343741;transform:scaleX(0.8801);">syscheck.</div>
<div class="a" style="left:829px;top:731px;width:75.39999999999998px;height:22px;background:#e6f0f8;border:1px solid #d3e1ef;border-radius:4px;border-left:none;border-top-left-radius:0;border-bottom-left-radius:0;"></div>
<div class="t" style="left:828.20px;top:734.88px;font-size:15.5px;color:#343741;transform:scaleX(0.9446);">perm_after</div>
<div class="t" style="left:909.80px;top:734.88px;font-size:15.5px;color:#343741;transform:scaleX(0.9355);">001204</div>
<div class="a" style="left:963.3px;top:731px;width:107.0px;height:22px;background:#e6f0f8;border:1px solid #d3e1ef;border-radius:4px;"></div>
<div class="t" style="left:968.70px;top:734.88px;font-size:15.5px;color:#343741;transform:scaleX(0.9078);">syscheck.event</div>
<div class="t" style="left:1075.90px;top:734.88px;font-size:15.5px;color:#343741;transform:scaleX(0.9847);">modified</div>
<div class="a" style="left:1139.5px;top:731px;width:137.0px;height:22px;background:#e6f0f8;border:1px solid #d3e1ef;border-radius:4px;"></div>
<div class="t" style="left:1144.90px;top:734.88px;font-size:15.5px;color:#343741;transform:scaleX(0.9155);">syscheck.md5_after</div>
<div class="t" style="left:1281.90px;top:734.88px;font-size:15.5px;color:#343741;transform:scaleX(0.9329);">ba62eb8d83f89e2cab34d63a06ed43c5</div>
<div class="a" style="left:1539.8px;top:731px;width:149.60000000000014px;height:22px;background:#e6f0f8;border:1px solid #d3e1ef;border-radius:4px;"></div>
<div class="t" style="left:1545.20px;top:734.88px;font-size:15.5px;color:#343741;transform:scaleX(0.8999);">syscheck.sha1_before</div>
<div class="t" style="left:1694.70px;top:734.88px;font-size:15.5px;color:#343741;transform:scaleX(0.9325);">a9ff574809c81ac1c3f8a...</div>
<div class="a" style="left:522px;top:761px;width:1348px;height:1px;background:#d3dae6;"></div>
<svg style="left:0;top:0" width="1" height="1"><g transform="translate(535.6,775.8)" fill="none" stroke="#006bb8" stroke-width="1.4"><path d="M3.5 17.4 Q0.7 17.4 0.7 14.6 V3.4 Q0.7 0.7 3.4 0.7 H14.3 Q17 0.7 17 3.4 V4.3"/><circle cx="11.2" cy="10.8" r="5.3"/><path d="M15 14.8 L18.4 18.3"/><path d="M3 3.3 H15 M3 3.3 V14" stroke-width="1" stroke-dasharray="1 1.4"/></g></svg>
<div class="t" style="left:578.60px;top:774.76px;font-size:18px;color:#343741;transform:scaleX(0.9185);">May 8, 2024 @ 05:15:32.523</div>
<div class="a" style="left:829.3px;top:773px;width:100.40000000000009px;height:22px;background:#e6f0f8;border:1px solid #d3e1ef;border-radius:4px;"></div>
<div class="t" style="left:834.70px;top:776.88px;font-size:15.5px;color:#343741;transform:scaleX(0.9122);">syscheck.path</div>
<div class="t" style="left:934.70px;top:776.88px;font-size:15.5px;color:#343741;transform:scaleX(0.9599);">/special_dir/file1</div>
<div class="a" style="left:1047.2px;top:773px;width:137.5999999999999px;height:22px;background:#e6f0f8;border:1px solid #d3e1ef;border-radius:4px;"></div>
<div class="t" style="left:1052.60px;top:776.88px;font-size:15.5px;color:#343741;transform:scaleX(0.8974);">syscheck.sha1_after</div>
<div class="t" style="left:1189.20px;top:776.88px;font-size:15.5px;color:#343741;transform:scaleX(0.9385);">9e7633f2260abb2b3de4cdf7589305a4197e757b</div>
<div class="a" style="left:1509.7px;top:773px;width:143.70000000000005px;height:22px;background:#e6f0f8;border:1px solid #d3e1ef;border-radius:4px;"></div>
<div class="t" style="left:1515.10px;top:776.88px;font-size:15.5px;color:#343741;transform:scaleX(0.8968);">syscheck.size_before</div>
<div class="t" style="left:1659.20px;top:776.88px;font-size:15.5px;color:#343741;transform:scaleX(0.9275);">5</div>
<div class="a" style="left:1672.3px;top:773px;width:184.5px;height:22px;background:#e6f0f8;border:1px solid #d3e1ef;border-radius:4px;border-right:none;border-top-right-radius:0;border-bottom-right-radius:0;"></div>
<div class="t" style="left:1677.70px;top:776.88px;font-size:15.5px;color:#343741;transform:scaleX(0.9321);">syscheck.changed_attribute</div>
<div class="a" style="left:829px;top:799px;width:11.5px;height:22px;background:#e6f0f8;border:1px solid #d3e1ef;border-radius:4px;border-left:none;border-top-left-radius:0;border-bottom-left-radius:0;"></div>
<div class="t" style="left:828.20px;top:802.88px;font-size:15.5px;color:#343741;transform:scaleX(0.8774);">s</div>
<div class="t" style="left:845.30px;top:802.88px;font-size:15.5px;color:#343741;transform:scaleX(0.9073);">size, md5, sha1</div>
<div class="a" style="left:949.4px;top:799px;width:130.80000000000007px;height:22px;background:#e6f0f8;border:1px solid #d3e1ef;border-radius:4px;"></div>
<div class="t" style="left:954.80px;top:802.88px;font-size:15.5px;color:#343741;transform:scaleX(0.8872);">syscheck.size_after</div>
<div class="t" style="left:1085.60px;top:802.88px;font-size:15.5px;color:#343741;transform:scaleX(0.9971);">6</div>
<div class="a" style="left:1099.3px;top:799px;width:128.20000000000005px;height:22px;background:#e6f0f8;border:1px solid #d3e1ef;border-radius:4px;"></div>
<div class="t" style="left:1104.70px;top:802.88px;font-size:15.5px;color:#343741;transform:scaleX(0.9145);">syscheck.uid_after</div>
<div class="t" style="left:1232.40px;top:802.88px;font-size:15.5px;color:#343741;transform:scaleX(1.0551);">0</div>
<div class="a" style="left:1246.25px;top:799px;width:128.3499999999999px;height:22px;background:#e6f0f8;border:1px solid #d3e1ef;border-radius:4px;"></div>
<div class="t" style="left:1251.65px;top:802.88px;font-size:15.5px;color:#343741;transform:scaleX(0.9157);">syscheck.gid_after</div>
<div class="t" style="left:1380.00px;top:802.88px;font-size:15.5px;color:#343741;transform:scaleX(0.9971);">0</div>
<div class="a" style="left:1393.1px;top:799px;width:149.60000000000014px;height:22px;background:#e6f0f8;border:1px solid #d3e1ef;border-radius:4px;"></div>
<div class="t" style="left:1398.50px;top:802.88px;font-size:15.5px;color:#343741;transform:scaleX(0.9205);">syscheck.md5_before</div>
<div class="t" style="left:1548.80px;top:802.88px;font-size:15.5px;color:#343741;transform:scaleX(0.9400);">14a47f5bf4c5b0fa3f8e4abc97c5f11e</div>
<div class="a" style="left:1789.1px;top:799px;width:65.90000000000009px;height:22px;background:#e6f0f8;border:1px solid #d3e1ef;border-radius:4px;border-right:none;border-top-right-radius:0;border-bottom-right-radius:0;"></div>
<div class="t" style="left:1794.50px;top:802.88px;font-size:15.5px;color:#343741;transform:scaleX(0.8801);">syscheck.</div>
<div class="a" style="left:829px;top:825px;width:75.39999999999998px;height:22px;background:#e6f0f8;border:1px solid #d3e1ef;border-radius:4px;border-left:none;border-top-left-radius:0;border-bottom-left-radius:0;"></div>
<div class="t" style="left:828.20px;top:828.88px;font-size:15.5px;color:#343741;transform:scaleX(0.9446);">perm_after</div>
<div class="t" style="left:909.80px;top:828.88px;font-size:15.5px;color:#343741;transform:scaleX(0.9355);">001204</div>
<div class="a" style="left:963.3px;top:825px;width:107.0px;height:22px;background:#e6f0f8;border:1px solid #d3e1ef;border-radius:4px;"></div>
<div class="t" style="left:968.70px;top:828.88px;font-size:15.5px;color:#343741;transform:scaleX(0.9078);">syscheck.event</div>
<div class="t" style="left:1075.90px;top:828.88px;font-size:15.5px;color:#343741;transform:scaleX(0.9847);">modified</div>
<div class="a" style="left:1139.5px;top:825px;width:137.0px;height:22px;background:#e6f0f8;border:1px solid #d3e1ef;border-radius:4px;"></div>
<div class="t" style="left:1144.90px;top:828.88px;font-size:15.5px;color:#343741;transform:scaleX(0.9155);">syscheck.md5_after</div>
<div class="t" style="left:1281.90px;top:828.88px;font-size:15.5px;color:#343741;transform:scaleX(0.9329);">ba62eb8d83f89e2cab34d63a06ed43c5</div>
<div class="a" style="left:1539.8px;top:825px;width:149.60000000000014px;height:22px;background:#e6f0f8;border:1px solid #d3e1ef;border-radius:4px;"></div>
<div class="t" style="left:1545.20px;top:828.88px;font-size:15.5px;color:#343741;transform:scaleX(0.8999);">syscheck.sha1_before</div>
<div class="t" style="left:1694.70px;top:828.88px;font-size:15.5px;color:#343741;transform:scaleX(0.9325);">a9ff574809c81ac1c3f8a...</div>
<div class="a" style="left:522px;top:855px;width:1348px;height:1px;background:#d3dae6;"></div>
<svg style="left:0;top:0" width="1" height="1"><g transform="translate(535.6,868.8)" fill="none" stroke="#006bb8" stroke-width="1.4"><path d="M3.5 17.4 Q0.7 17.4 0.7 14.6 V3.4 Q0.7 0.7 3.4 0.7 H14.3 Q17 0.7 17 3.4 V4.3"/><circle cx="11.2" cy="10.8" r="5.3"/><path d="M15 14.8 L18.4 18.3"/><path d="M3 3.3 H15 M3 3.3 V14" stroke-width="1" stroke-dasharray="1 1.4"/></g></svg>
<div class="t" style="left:578.60px;top:867.76px;font-size:18px;color:#343741;transform:scaleX(0.9185);">May 8, 2024 @ 04:47:41.557</div>
<div class="a" style="left:829.3px;top:866px;width:100.40000000000009px;height:22px;background:#e6f0f8;border:1px solid #d3e1ef;border-radius:4px;"></div>
<div class="t" style="left:834.70px;top:869.88px;font-size:15.5px;color:#343741;transform:scaleX(0.9122);">syscheck.path</div>
<div class="t" style="left:934.70px;top:869.88px;font-size:15.5px;color:#343741;transform:scaleX(0.9599);">/special_dir/file1</div>
<div class="a" style="left:1047.2px;top:866px;width:137.5999999999999px;height:22px;background:#e6f0f8;border:1px solid #d3e1ef;border-radius:4px;"></div>
<div class="t" style="left:1052.60px;top:869.88px;font-size:15.5px;color:#343741;transform:scaleX(0.8974);">syscheck.sha1_after</div>
<div class="t" style="left:1189.20px;top:869.88px;font-size:15.5px;color:#343741;transform:scaleX(0.9385);">9e7633f2260abb2b3de4cdf7589305a4197e757b</div>
<div class="a" style="left:1509.7px;top:866px;width:143.70000000000005px;height:22px;background:#e6f0f8;border:1px solid #d3e1ef;border-radius:4px;"></div>
<div class="t" style="left:1515.10px;top:869.88px;font-size:15.5px;color:#343741;transform:scaleX(0.8968);">syscheck.size_before</div>
<div class="t" style="left:1659.20px;top:869.88px;font-size:15.5px;color:#343741;transform:scaleX(0.9275);">5</div>
<div class="a" style="left:1672.3px;top:866px;width:184.5px;height:22px;background:#e6f0f8;border:1px solid #d3e1ef;border-radius:4px;border-right:none;border-top-right-radius:0;border-bottom-right-radius:0;"></div>
<div class="t" style="left:1677.70px;top:869.88px;font-size:15.5px;color:#343741;transform:scaleX(0.9321);">syscheck.changed_attribute</div>
<div class="a" style="left:829px;top:892px;width:11.5px;height:22px;background:#e6f0f8;border:1px solid #d3e1ef;border-radius:4px;border-left:none;border-top-left-radius:0;border-bottom-left-radius:0;"></div>
<div class="t" style="left:828.20px;top:895.88px;font-size:15.5px;color:#343741;transform:scaleX(0.8774);">s</div>
<div class="t" style="left:845.30px;top:895.88px;font-size:15.5px;color:#343741;transform:scaleX(0.9073);">size, md5, sha1</div>
<div class="a" style="left:949.4px;top:892px;width:130.80000000000007px;height:22px;background:#e6f0f8;border:1px solid #d3e1ef;border-radius:4px;"></div>
<div class="t" style="left:954.80px;top:895.88px;font-size:15.5px;color:#343741;transform:scaleX(0.8872);">syscheck.size_after</div>
<div class="t" style="left:1085.60px;top:895.88px;font-size:15.5px;color:#343741;transform:scaleX(0.9971);">6</div>
<div class="a" style="left:1099.3px;top:892px;width:128.20000000000005px;height:22px;background:#e6f0f8;border:1px solid #d3e1ef;border-radius:4px;"></div>
<div class="t" style="left:1104.70px;top:895.88px;font-size:15.5px;color:#343741;transform:scaleX(0.9145);">syscheck.uid_after</div>
<div class="t" style="left:1232.40px;top:895.88px;font-size:15.5px;color:#343741;transform:scaleX(1.0551);">0</div>
<div class="a" style="left:1246.25px;top:892px;width:128.3499999999999px;height:22px;background:#e6f0f8;border:1px solid #d3e1ef;border-radius:4px;"></div>
<div class="t" style="left:1251.65px;top:895.88px;font-size:15.5px;color:#343741;transform:scaleX(0.9157);">syscheck.gid_after</div>
<div class="t" style="left:1380.00px;top:895.88px;font-size:15.5px;color:#343741;transform:scaleX(0.9971);">0</div>
<div class="a" style="left:1393.1px;top:892px;width:149.60000000000014px;height:22px;background:#e6f0f8;border:1px solid #d3e1ef;border-radius:4px;"></div>
<div class="t" style="left:1398.50px;top:895.88px;font-size:15.5px;color:#343741;transform:scaleX(0.9205);">syscheck.md5_before</div>
<div class="t" style="left:1548.80px;top:895.88px;font-size:15.5px;color:#343741;transform:scaleX(0.9400);">14a47f5bf4c5b0fa3f8e4abc97c5f11e</div>
<div class="a" style="left:1789.1px;top:892px;width:65.90000000000009px;height:22px;background:#e6f0f8;border:1px solid #d3e1ef;border-radius:4px;border-right:none;border-top-right-radius:0;border-bottom-right-radius:0;"></div>
<div class="t" style="left:1794.50px;top:895.88px;font-size:15.5px;color:#343741;transform:scaleX(0.8801);">syscheck.</div>
<div class="a" style="left:829px;top:918px;width:75.39999999999998px;height:22px;background:#e6f0f8;border:1px solid #d3e1ef;border-radius:4px;border-left:none;border-top-left-radius:0;border-bottom-left-radius:0;"></div>
<div class="t" style="left:828.20px;top:921.88px;font-size:15.5px;color:#343741;transform:scaleX(0.9446);">perm_after</div>
<div class="t" style="left:909.80px;top:921.88px;font-size:15.5px;color:#343741;transform:scaleX(0.9355);">001204</div>
<div class="a" style="left:963.3px;top:918px;width:107.0px;height:22px;background:#e6f0f8;border:1px solid #d3e1ef;border-radius:4px;"></div>
<div class="t" style="left:968.70px;top:921.88px;font-size:15.5px;color:#343741;transform:scaleX(0.9078);">syscheck.event</div>
<div class="t" style="left:1075.90px;top:921.88px;font-size:15.5px;color:#343741;transform:scaleX(0.9847);">modified</div>
<div class="a" style="left:1139.5px;top:918px;width:137.0px;height:22px;background:#e6f0f8;border:1px solid #d3e1ef;border-radius:4px;"></div>
<div class="t" style="left:1144.90px;top:921.88px;font-size:15.5px;color:#343741;transform:scaleX(0.9155);">syscheck.md5_after</div>
<div class="t" style="left:1281.90px;top:921.88px;font-size:15.5px;color:#343741;transform:scaleX(0.9329);">ba62eb8d83f89e2cab34d63a06ed43c5</div>
<div class="a" style="left:1539.8px;top:918px;width:149.60000000000014px;height:22px;background:#e6f0f8;border:1px solid #d3e1ef;border-radius:4px;"></div>
<div class="t" style="left:1545.20px;top:921.88px;font-size:15.5px;color:#343741;transform:scaleX(0.8999);">syscheck.sha1_before</div>
<div class="t" style="left:1694.70px;top:921.88px;font-size:15.5px;color:#343741;transform:scaleX(0.9325);">a9ff574809c81ac1c3f8a...</div>
</div>
</body></html>
